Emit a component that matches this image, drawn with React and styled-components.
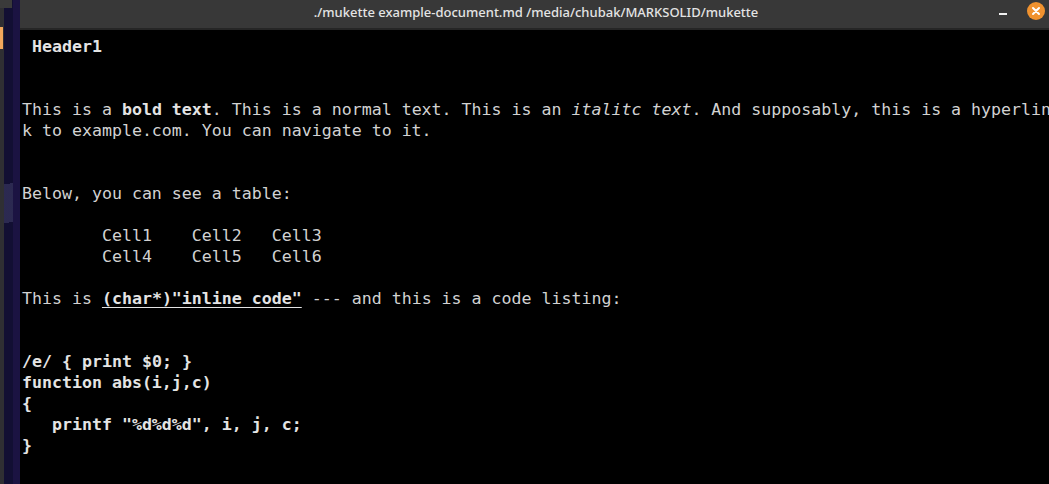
import React from 'react'
import styled, { createGlobalStyle } from 'styled-components'

const GlobalStyle = createGlobalStyle`
  html, body {
    margin: 0;
    padding: 0;
    background: #000;
    overflow: hidden;
  }
`

const Screen = styled.div`
  display: flex;
  width: 1049px;
  height: 484px;
  overflow: hidden;
`

// bit of desktop peeking out on the left
const DesktopStrip = styled.div`
  width: 20px;
  flex: none;
  display: flex;
  flex-direction: column;
  background:
    linear-gradient(170deg, transparent 0 38%, rgba(120, 120, 170, 0.25) 38% 46%, transparent 46%) 4px 0 / 9px 100% no-repeat,
    linear-gradient(to right, #2f2f33 0 4px, #120f33 4px 13px, #1b1342 13px 20px);
`

const OtherTitle = styled.div`
  width: 12px;
  height: 8px;
  background: #3a3a3a;
`

const OrangeTab = styled.div`
  width: 3px;
  height: 22px;
  margin-top: 19px;
  background: #f2a75c;
`

const Window = styled.div`
  flex: 1;
  display: flex;
  flex-direction: column;
  background: #000;
  min-width: 0;
`

const TitleBar = styled.div`
  height: 28px;
  flex: none;
  display: grid;
  grid-template-columns: 1fr auto 1fr;
  align-items: center;
  background: #383838;
  border-bottom: 2px solid #262626;
`

const Title = styled.div`
  grid-column: 2;
  font-family: "Noto Sans", sans-serif;
  font-size: 13px;
  font-weight: 500;
  color: #e4e4e4;
  padding-bottom: 5px;
  padding-left: 3px;
  white-space: nowrap;
`

const Controls = styled.div`
  grid-column: 3;
  justify-self: end;
  display: flex;
  align-items: center;
  gap: 20px;
  padding-right: 4px;
  padding-bottom: 6px;
`

const Minimize = styled.div`
  width: 8px;
  height: 2px;
  margin-top: 6px;
  background: #f0f0f0;
`

const Close = styled.div`
  width: 18px;
  height: 18px;
  border-radius: 50%;
  background: #f0922f;
  display: flex;
  align-items: center;
  justify-content: center;
`

const Terminal = styled.div`
  flex: 1;
  padding: 6px 0 0 2px;
  font-family: "DejaVu Sans Mono", monospace;
  font-size: 16.6px;
  line-height: 21px;
  color: #d2d2d2;
  white-space: pre;
  overflow: hidden;
`

const Line = styled.div`
  height: 21px;
`

const B = styled.b`
  font-weight: bold;
  color: #e4e4e4;
`

const I = styled.i`
  font-style: italic;
`

const Code = styled.b`
  font-weight: bold;
  color: #e4e4e4;
  text-decoration: underline;
  text-underline-offset: 3px;
`

const CodeLine = styled(Line)`
  font-weight: bold;
  color: #e4e4e4;
`

const CloseIcon = () => (
  <svg width="10" height="10" viewBox="0 0 10 10">
    <path d="M2 2 L8 8 M8 2 L2 8" stroke="#fff" strokeWidth="2" strokeLinecap="round" />
  </svg>
)

const App = () => (
  <>
    <GlobalStyle />
    <Screen>
      <DesktopStrip>
        <OtherTitle />
        <OrangeTab />
      </DesktopStrip>
      <Window>
        <TitleBar>
          <Title>./mukette example-document.md /media/chubak/MARKSOLID/mukette</Title>
          <Controls>
            <Minimize />
            <Close><CloseIcon /></Close>
          </Controls>
        </TitleBar>
        <Terminal>
          <Line> <B>Header1</B></Line>
          <Line />
          <Line />
          <Line>This is a <B>bold text</B>. This is a normal text. This is an <I>italitc text</I>. And supposably, this is a hyperlin</Line>
          <Line>k to example.com. You can navigate to it.</Line>
          <Line />
          <Line />
          <Line>Below, you can see a table:</Line>
          <Line />
          <Line>        Cell1    Cell2   Cell3</Line>
          <Line>        Cell4    Cell5   Cell6</Line>
          <Line />
          <Line>This is <Code>(char*)"inline code"</Code> --- and this is a code listing:</Line>
          <Line />
          <Line />
          <CodeLine>/e/ {'{'} print $0; {'}'}</CodeLine>
          <CodeLine>function abs(i,j,c)</CodeLine>
          <CodeLine>{'{'}</CodeLine>
          <CodeLine>   printf "%d%d%d", i, j, c;</CodeLine>
          <CodeLine>{'}'}</CodeLine>
        </Terminal>
      </Window>
    </Screen>
  </>
)

export default App
